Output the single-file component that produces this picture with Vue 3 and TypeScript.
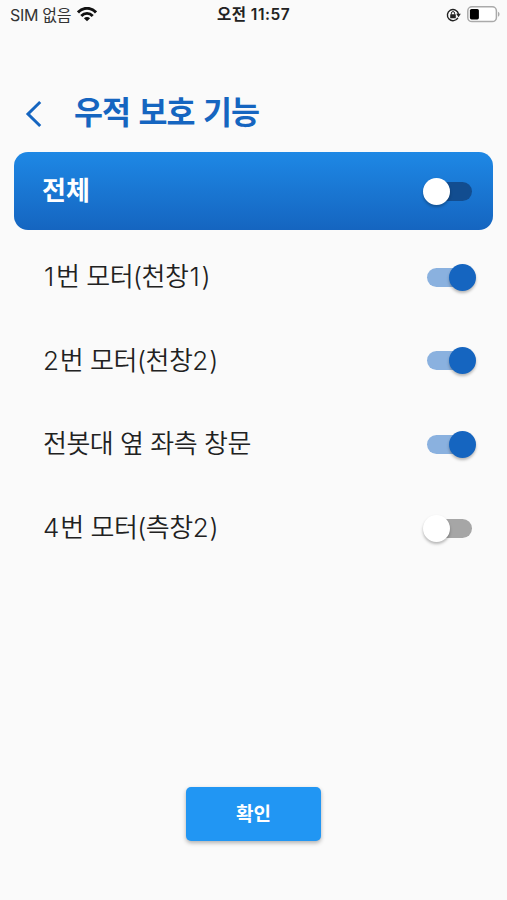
<script setup lang="ts">
import { computed, ref } from 'vue'

interface Motor {
  id: number
  name: string
  on: boolean
}

const motors = ref<Motor[]>([
  { id: 1, name: '1번 모터(천창1)', on: true },
  { id: 2, name: '2번 모터(천창2)', on: true },
  { id: 3, name: '전봇대 옆 좌측 창문', on: true },
  { id: 4, name: '4번 모터(측창2)', on: false },
])

const allOn = computed(() => motors.value.every((m) => m.on))

function toggleAll() {
  const next = !allOn.value
  motors.value.forEach((m) => (m.on = next))
}

// Digits get their own span so that a narrow "1" keeps a minimum width.
function segments(name: string): string[] {
  return name.split(/(\d)/).filter((s) => s !== '')
}

function isDigit(s: string): boolean {
  return /^\d$/.test(s)
}
</script>

<template>
  <div class="screen">
    <div class="status">
      <div class="carrier">
        <span class="sim">SIM 없음</span>
        <svg class="wifi" width="20" height="15" viewBox="0 0 20 15">
          <g fill="none" stroke="#111" stroke-width="2.9">
            <path d="M1 5.4C6-.1 14-.1 19 5.4" />
            <path d="M4.3 8.9c3.2-3.4 8.2-3.4 11.4 0" />
          </g>
          <path d="M10 14.3l-3.1-3.1c1.8-1.6 4.4-1.6 6.2 0z" fill="#111" />
        </svg>
      </div>
      <div class="clock">오전 11:57</div>
      <div class="indicators">
        <svg width="15" height="14" viewBox="0 0 15 14">
          <path d="M11.9 9.8A5.6 5.6 0 1 1 12.5 6" fill="none" stroke="#222" stroke-width="1.4" />
          <path d="M10.2 5.8h4.6l-2.3 3.4z" fill="#222" />
          <rect x="4.2" y="6.3" width="5.6" height="4" rx=".5" fill="#222" />
          <path d="M5.4 6.6V5.2a1.6 1.6 0 0 1 3.2 0v1.4" fill="none" stroke="#222" stroke-width="1" />
        </svg>
        <svg width="33" height="17" viewBox="0 0 33 17">
          <rect x=".8" y=".8" width="28.6" height="14.8" rx="4.2" fill="#fff" stroke="#aaa" stroke-width="1.5" />
          <rect x="2.9" y="3" width="9" height="10.4" rx="1.6" fill="#000" />
          <path d="M31 5.7c2 .8 2 4.2 0 5z" fill="#aaa" />
        </svg>
      </div>
    </div>

    <header class="header">
      <button class="back" aria-label="뒤로">
        <svg width="17" height="28" viewBox="0 0 17 28">
          <path d="M15.2 2L3 14l12.2 12" fill="none" stroke="#1565c0" stroke-width="3" />
        </svg>
      </button>
      <h1 class="title">우적 보호 기능</h1>
    </header>

    <div class="all">
      <span class="all-label">전체</span>
      <button class="switch dark" :class="{ on: allOn }" role="switch" :aria-checked="allOn" @click="toggleAll">
        <span class="thumb" />
      </button>
    </div>

    <ul class="list">
      <li v-for="m in motors" :key="m.id" class="row">
        <span class="name"><span v-for="(s, i) in segments(m.name)" :key="i" :class="{ digit: isDigit(s) }">{{ s }}</span></span>
        <button class="switch" :class="{ on: m.on }" role="switch" :aria-checked="m.on" @click="m.on = !m.on">
          <span class="thumb" />
        </button>
      </li>
    </ul>

    <button class="confirm">확인</button>
  </div>
</template>

<style>
body {
  background: #fafafa;
}
</style>

<style scoped>
.screen {
  box-sizing: border-box;
  height: 900px;
  display: flex;
  flex-direction: column;
  background: #fafafa;
  font-family: Inter, 'Noto Sans CJK KR', sans-serif;
  color: #212121;
  overflow: hidden;
}
button {
  border: 0;
  padding: 0;
  background: none;
  font-family: inherit;
}
.status {
  height: 29px;
  padding: 0 7px 0 10px;
  display: grid;
  grid-template-columns: 1fr auto 1fr;
  align-items: center;
  line-height: 28px;
}
.carrier,
.indicators {
  display: flex;
  align-items: center;
}
.carrier {
  gap: 6px;
}
.sim {
  font-size: 16px;
  letter-spacing: -0.3px;
  color: #333;
}
.clock {
  padding-right: 3px;
  font-size: 15.5px;
  font-weight: 600;
  letter-spacing: 0.5px;
  color: #222;
}
.indicators {
  justify-content: flex-end;
  gap: 6px;
}
.header {
  height: 123px;
  box-sizing: border-box;
  padding: 46px 0 0 25px;
  display: flex;
  align-items: center;
  gap: 32px;
}
.back {
  display: flex;
}
.title {
  margin: 0;
  padding-bottom: 1px;
  font-size: 31.5px;
  line-height: 46px;
  font-weight: 700;
  letter-spacing: -1.1px;
  word-spacing: 2.4px;
  color: #1565c0;
}
.all {
  height: 78px;
  flex: none;
  margin: 0 14px;
  padding: 0 21px 0 28px;
  box-sizing: border-box;
  display: flex;
  align-items: center;
  justify-content: space-between;
  border-radius: 14px;
  background: linear-gradient(#1e88e5, #1565c0);
}
.all-label {
  padding-bottom: 5px;
  font-size: 26px;
  font-weight: 700;
  color: #fff;
}
.list {
  list-style: none;
  margin: 5.5px 0 0;
  padding: 0 35px 0 43px;
}
.row {
  height: 83.6px;
  display: flex;
  align-items: center;
  justify-content: space-between;
}
.name {
  padding-bottom: 5px;
  font-size: 26px;
  font-weight: 350;
  letter-spacing: -0.5px;
}
.digit {
  display: inline-block;
  box-sizing: border-box;
  min-width: 13px;
  padding-right: 1.4px;
  font-weight: 300;
  text-align: center;
}
.switch {
  width: 45px;
  height: 19px;
  border-radius: 10px;
  display: flex;
  align-items: center;
  background: #a6a6a6;
}
.switch.dark {
  background: #124d90;
}
.thumb {
  width: 27px;
  height: 27px;
  flex: none;
  margin-left: -4px;
  border-radius: 50%;
  background: #fff;
  box-shadow: 0 2px 3px rgba(0, 0, 0, 0.28);
}
.switch.on {
  background: #8ab1df;
}
.switch.on .thumb {
  margin-left: 22px;
  background: #1565c0;
}
.confirm {
  box-sizing: border-box;
  width: 135px;
  height: 54px;
  margin: auto auto 59px;
  padding-bottom: 4px;
  border-radius: 5px;
  background: #2196f3;
  box-shadow: 0 2px 4px rgba(0, 0, 0, 0.3);
  color: #fff;
  font-size: 19px;
  font-weight: 700;
}
</style>
